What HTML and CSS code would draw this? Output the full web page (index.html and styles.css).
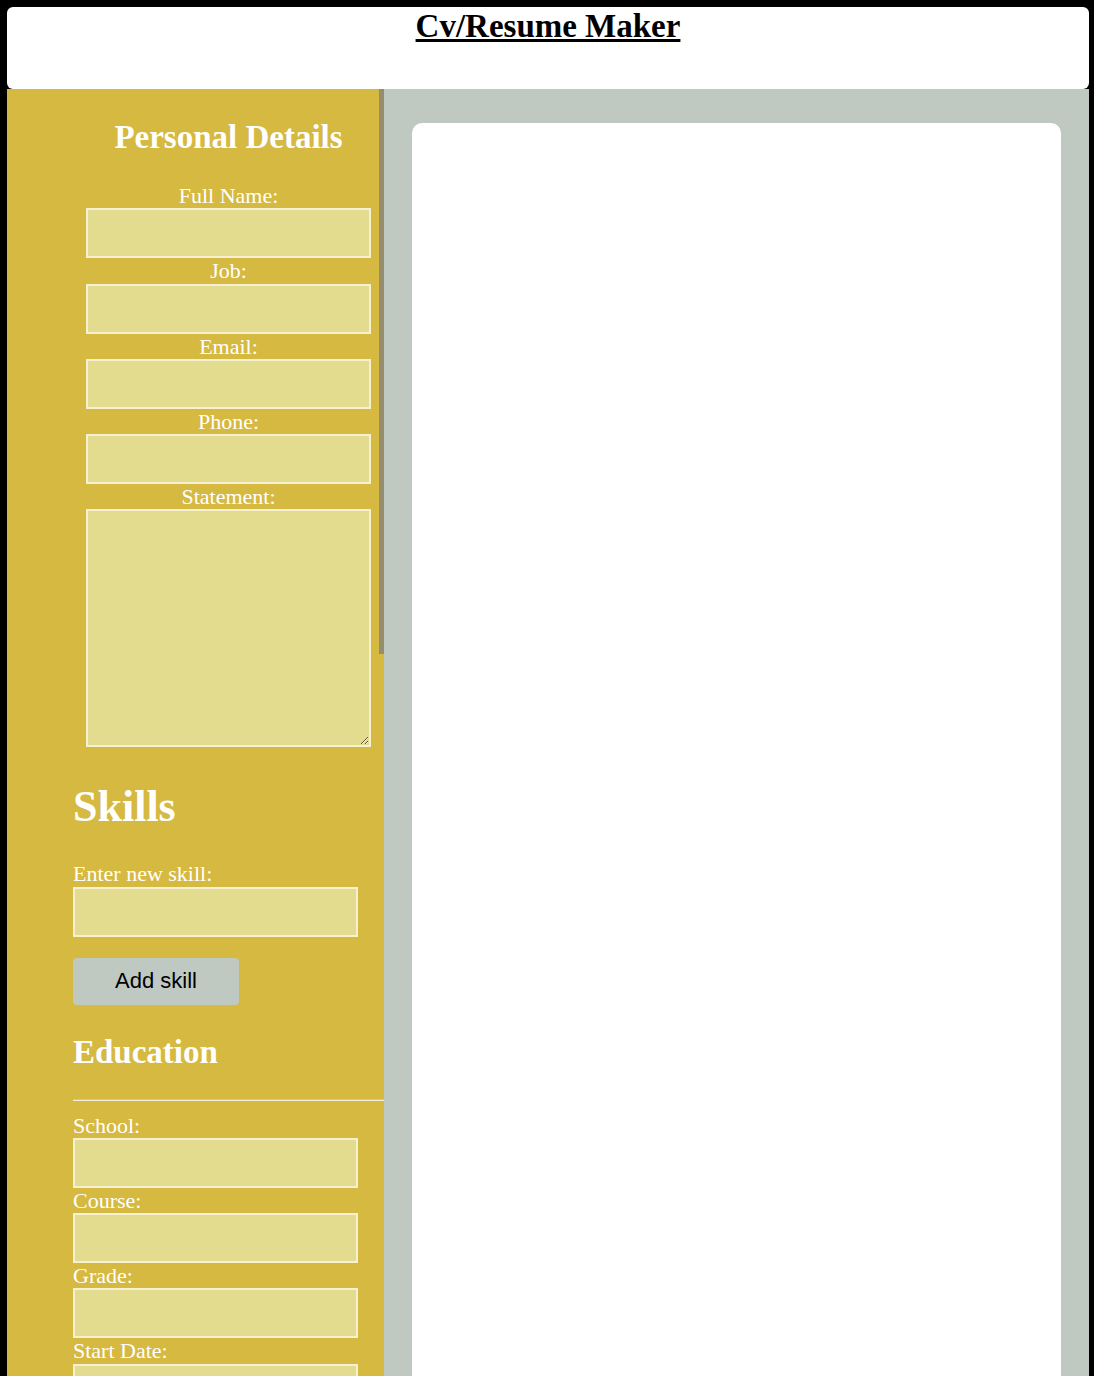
FILE: index.html
```html
<!DOCTYPE html>
<html lang="en">
<head>
<meta charset="utf-8">
<title>Cv/Resume Maker</title>
<link rel="stylesheet" href="styles.css">
</head>
<body>
<div class="app">
  <header class="topbar">
    <h1 class="title">Cv/Resume Maker</h1>
  </header>
  <div class="content">
    <aside class="sidebar">
      <div class="thumb"></div>
      <section class="personal">
        <h2 class="sec-title">Personal Details</h2>
        <label class="lbl" for="fn">Full Name:</label>
        <input class="field" id="fn" type="text">
        <label class="lbl" for="job">Job:</label>
        <input class="field" id="job" type="text">
        <label class="lbl" for="em">Email:</label>
        <input class="field" id="em" type="text">
        <label class="lbl" for="ph">Phone:</label>
        <input class="field" id="ph" type="text">
        <label class="lbl" for="st">Statement:</label>
        <textarea class="field area" id="st"></textarea>
      </section>
      <section class="skills">
        <h1 class="skills-title">Skills</h1>
        <label class="lbl" for="sk">Enter new skill:</label>
        <input class="field" id="sk" type="text">
        <button class="btn" type="button">Add skill</button>
        <h2 class="edu-title">Education</h2>
        <hr class="rule">
        <label class="lbl" for="sc">School:</label>
        <input class="field" id="sc" type="text">
        <label class="lbl" for="co">Course:</label>
        <input class="field" id="co" type="text">
        <label class="lbl" for="gr">Grade:</label>
        <input class="field" id="gr" type="text">
        <label class="lbl" for="sd">Start Date:</label>
        <input class="field" id="sd" type="text">
        <label class="lbl" for="ed">End Date:</label>
        <input class="field" id="ed" type="text">
        <button class="btn" type="button">Add education</button>
      </section>
    </aside>
    <main class="preview">
      <div class="paper"></div>
    </main>
  </div>
</div>
</body>
</html>
```

FILE: styles.css
```css
html, body {
  margin: 0;
  padding: 0;
  background: #000;
}
body {
  font-family: "Liberation Serif", "Times New Roman", serif;
  font-size: 22px;
  overflow: hidden;
}
.app {
  padding: 7px 5px 0 7px;
}
.topbar {
  background: #fff;
  height: 82px;
  border-radius: 6px;
  text-align: center;
}
.title {
  margin: 0;
  font-size: 33px;
  line-height: 38px;
  font-weight: bold;
  text-decoration: underline;
  color: #000;
}
.content {
  display: flex;
  align-items: stretch;
}
.sidebar {
  position: relative;
  width: 377px;
  flex: 0 0 377px;
  background: #d6b940;
  color: #fff;
  padding-bottom: 40px;
}
.thumb {
  position: absolute;
  top: 0;
  right: 0;
  width: 5px;
  height: 565px;
  background: #958d6c;
}
.personal {
  margin-left: 79px;
  width: 285px;
  text-align: center;
}
.sec-title {
  margin: 29px 0 27px;
  font-size: 33px;
  line-height: 38px;
  font-weight: bold;
  white-space: nowrap;
}
.lbl {
  display: block;
  font-size: 22px;
  line-height: 25.25px;
}
.field {
  display: block;
  box-sizing: border-box;
  width: 285px;
  height: 50px;
  margin: 0;
  border: 2px solid #f6f1d2;
  background: #e3dc8e;
  font-family: "Liberation Serif", serif;
  font-size: 18px;
  outline: none;
}
.area {
  height: 238px;
}
.skills {
  margin-left: 66px;
}
.skills-title {
  margin: 34px 0 29px;
  font-size: 44px;
  line-height: 51px;
  font-weight: bold;
}
.btn {
  display: block;
  margin-top: 21px;
  width: 166px;
  height: 47px;
  border: none;
  border-radius: 4px;
  background: #c0c9c1;
  color: #000;
  font-family: "Liberation Sans", Arial, sans-serif;
  font-size: 22px;
}
.edu-title {
  margin: 28px 0 28px;
  font-size: 33px;
  line-height: 38px;
  font-weight: bold;
}
.rule {
  margin: 0 0 12px;
  height: 0;
  border: none;
  border-top: 1px solid #c9c6b8;
  border-bottom: 1px solid #f3efd9;
}
.preview {
  flex: 1;
  background: #c0c9c1;
  padding: 34px 28px 0;
}
.paper {
  background: #fff;
  border-radius: 10px;
  min-height: 1300px;
}
```
